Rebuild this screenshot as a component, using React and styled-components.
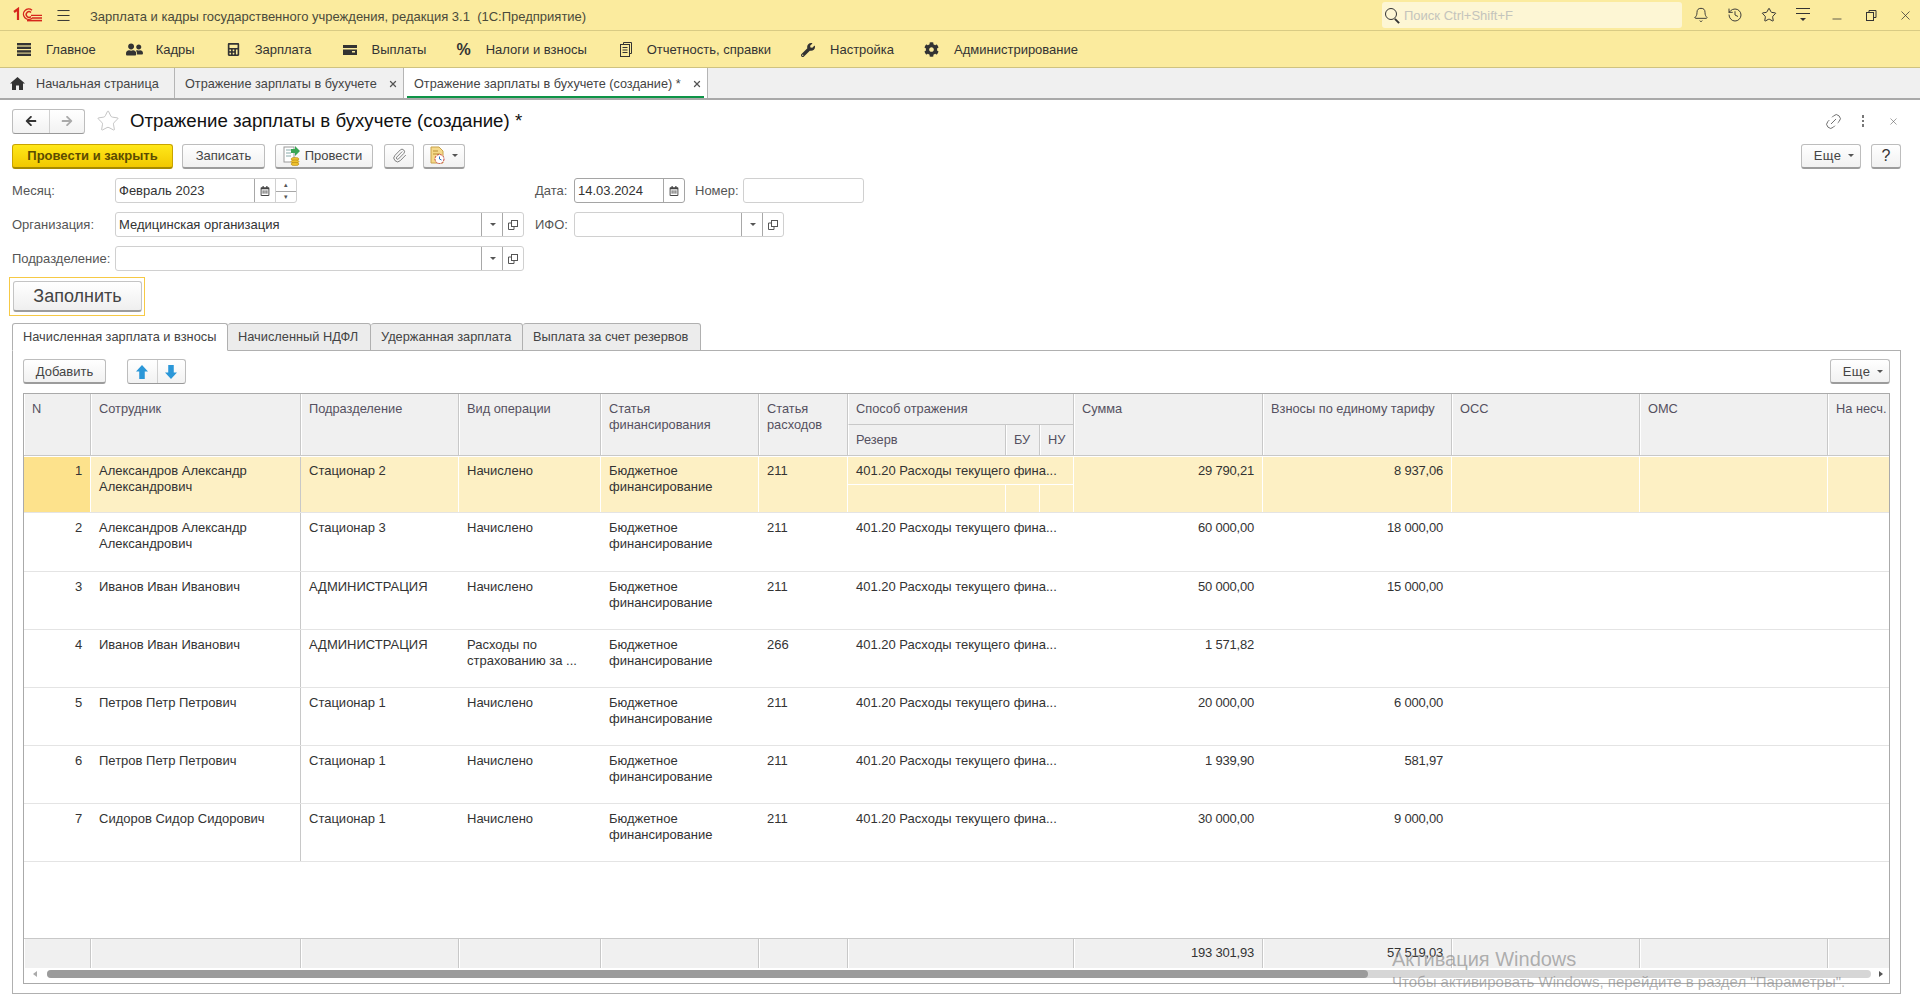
import React from "react";
import styled, { createGlobalStyle } from "styled-components";
import { Bell, History, Star, X, Minus, Link2, Paperclip, Menu } from "lucide-react";
import { FaCalculator, FaWrench, FaCog, FaUserFriends, FaArrowLeft, FaArrowRight, FaRegCalendarAlt } from "react-icons/fa";

const GlobalStyle = createGlobalStyle`
  html, body { margin: 0; padding: 0; background: #fff; }
  body { font-family: "Liberation Sans", Arial, sans-serif; font-size: 13px; color: #333; }
  * { box-sizing: border-box; }
`;

const COLUMNS = "67px 210px 158px 142px 158px 89px 158px 34px 34px 189px 189px 188px 188px 100px";

const FIN = "Бюджетное финансирование";
const WAY = "401.20 Расходы текущего фина...";
const rows = [
  { n: 1, name: "Александров Александр Александрович", dep: "Стационар 2", op: "Начислено", art: "211", sum: "29 790,21", fee: "8 937,06" },
  { n: 2, name: "Александров Александр Александрович", dep: "Стационар 3", op: "Начислено", art: "211", sum: "60 000,00", fee: "18 000,00" },
  { n: 3, name: "Иванов Иван Иванович", dep: "АДМИНИСТРАЦИЯ", op: "Начислено", art: "211", sum: "50 000,00", fee: "15 000,00" },
  { n: 4, name: "Иванов Иван Иванович", dep: "АДМИНИСТРАЦИЯ", op: "Расходы по страхованию за ...", art: "266", sum: "1 571,82", fee: "" },
  { n: 5, name: "Петров Петр Петрович", dep: "Стационар 1", op: "Начислено", art: "211", sum: "20 000,00", fee: "6 000,00" },
  { n: 6, name: "Петров Петр Петрович", dep: "Стационар 1", op: "Начислено", art: "211", sum: "1 939,90", fee: "581,97" },
  { n: 7, name: "Сидоров Сидор Сидорович", dep: "Стационар 1", op: "Начислено", art: "211", sum: "30 000,00", fee: "9 000,00" },
];

const ThickBars = () => (
  <svg width="14" height="13" viewBox="0 0 14 13">
    <rect y="0" width="14" height="2.4" fill="#333" />
    <rect y="3.6" width="14" height="2.4" fill="#333" />
    <rect y="7.2" width="14" height="2.4" fill="#333" />
    <rect y="10.6" width="14" height="2.4" fill="#333" />
  </svg>
);

const HomeIcon = () => (
  <svg width="15" height="13" viewBox="0 0 15 13" fill="#333">
    <path d="M7.5 0L15 6.6h-2V13H9V8.500H6V13H2V6.600H0z" />
  </svg>
);

const WalletIcon = () => (
  <svg width="14" height="12" viewBox="0 0 14 12" fill="#333">
    <path d="M0 1h14v3H0zM0 5.500h14V11H0z" />
    <rect x="9" y="7" width="3" height="1.500" fill="#fbeb9e" />
  </svg>
);

const ReportIcon = () => (
  <svg width="12" height="15" viewBox="0 0 12 15" fill="none" stroke="#333">
    <path d="M3.500 2.500V.5h8v11H9.500" />
    <rect x=".5" y="2.500" width="9" height="12" />
    <path d="M2.500 5.500h5M2.500 8h5M2.500 10.500h5" />
  </svg>
);

const BlockArrow = ({ down }) => (
  <svg width="12" height="14" viewBox="0 0 13 15" style={down ? { transform: "rotate(180deg)" } : undefined}>
    <path d="M6.500 0L13 7H9.500v8h-6V7H0z" fill="#2b97d8" />
  </svg>
);

const Logo = () => (
  <svg width="30" height="16" viewBox="0 0 30 16" fill="none" stroke="#d6261c">
    <path d="M1 5 L5 2 V13" strokeWidth="2.2" />
    <path d="M20 3.2 A5.2 5.2 0 1 0 20 11.2" strokeWidth="1.4" transform="translate(-1 0)" />
    <path d="M18 5.5 A2.8 2.8 0 1 0 18 9.5" strokeWidth="1.4" />
    <path d="M14 13.6 H29" strokeWidth="1.6" />
    <path d="M18 8.4 H29 M19 11 H29" strokeWidth="1.3" />
  </svg>
);

const PostIcon = () => (
  <svg width="18" height="20" viewBox="0 0 18 20">
    <rect x="1" y="1" width="10" height="15" fill="#fff" stroke="#9a9a9a" />
    <path d="M3 4h6M3 7h5M3 10h5" stroke="#8aa" />
    <path d="M8 3h4V0l5 5-5 5V7H8z" fill="#3aa655" />
    <ellipse cx="12" cy="13" rx="4" ry="1.6" fill="#eec22e" stroke="#b88a10" strokeWidth=".6" />
    <ellipse cx="12" cy="15.5" rx="4" ry="1.6" fill="#eec22e" stroke="#b88a10" strokeWidth=".6" />
    <ellipse cx="12" cy="18" rx="4" ry="1.6" fill="#eec22e" stroke="#b88a10" strokeWidth=".6" />
  </svg>
);

const DocClockIcon = () => (
  <svg width="15" height="19" viewBox="0 0 15 19">
    <path d="M1 1h8l4 4v12H1z" fill="#f5d98a" stroke="#c9a24a" />
    <path d="M3 5h5M3 8h7" stroke="#b98f35" />
    <circle cx="9.5" cy="13" r="4.5" fill="#fff" stroke="#c23a3a" strokeDasharray="2 1" />
    <path d="M9.5 10.5V13l2 1" stroke="#2a6fc0" fill="none" />
  </svg>
);

const RestoreIcon = () => (
  <svg width="11" height="11" viewBox="0 0 11 11" fill="none" stroke="#333">
    <rect x=".5" y="2.5" width="7" height="8" />
    <path d="M3 2.5V.5h7v7H7.500" />
  </svg>
);

const FilterIcon = () => (
  <svg width="16" height="16" viewBox="0 0 16 16" fill="none" stroke="#333">
    <path d="M1 1.500H15M1 6.500H15" />
    <path d="M5 11h6l-3 3z" fill="#333" stroke="none" />
  </svg>
);

const PopupIcon = () => (
  <svg width="10" height="10" viewBox="0 0 10 10" fill="none" stroke="#555">
    <rect x="3.500" y=".5" width="6" height="6" />
    <path d="M3.500 3H.5v6.500H6V6.500" />
  </svg>
);

const App = () => {
  const menuItems = [
    { icon: <ThickBars />, label: "Главное", ml: 17, gap: 15 },
    { icon: <FaUserFriends size={17} />, label: "Кадры", ml: 30, gap: 13 },
    { icon: <FaCalculator size={13} />, label: "Зарплата", ml: 32, gap: 15 },
    { icon: <WalletIcon />, label: "Выплаты", ml: 31, gap: 15 },
    { icon: <Percent>%</Percent>, label: "Налоги и взносы", ml: 30, gap: 15 },
    { icon: <ReportIcon />, label: "Отчетность, справки", ml: 33, gap: 15 },
    { icon: <FaWrench size={14} />, label: "Настройка", ml: 30, gap: 15 },
    { icon: <FaCog size={15} />, label: "Администрирование", ml: 30, gap: 15 },
  ];

  return (
    <Page>
      <GlobalStyle />
      <TopBar>
        <LogoSlot><Logo /></LogoSlot>
        <Menu size={17} strokeWidth={1.4} color="#333" />
        <AppTitle>Зарплата и кадры государственного учреждения, редакция 3.1&nbsp; (1С:Предприятие)</AppTitle>
        <SearchBox>
          <SearchGlass />
          <SearchHint>Поиск Ctrl+Shift+F</SearchHint>
        </SearchBox>
        <TopIcons>
          <Bell size={16} strokeWidth={1.4} />
          <History size={16} strokeWidth={1.4} />
          <Star size={16} strokeWidth={1.5} />
          <FilterIcon />
          <Minus size={14} strokeWidth={1.3} style={{ marginTop: 8 }} />
          <RestoreIcon />
          <X size={15} strokeWidth={1.2} />
        </TopIcons>
      </TopBar>

      <MenuBar>
        {menuItems.map((item) => (
          <MenuItem key={item.label} $ml={item.ml} $gap={item.gap}>
            <MenuIcon>{item.icon}</MenuIcon>
            {item.label}
          </MenuItem>
        ))}
      </MenuBar>

      <OpenTabs>
        <OpenTab $w={175}>
          <HomeIcon />
          <span>Начальная страница</span>
        </OpenTab>
        <OpenTab $w={229}>
          <span>Отражение зарплаты в бухучете</span>
          <X size={10} strokeWidth={3} color="#555" />
        </OpenTab>
        <OpenTab $w={304} $active>
          <span>Отражение зарплаты в бухучете (создание) *</span>
          <X size={10} strokeWidth={3} color="#555" />
        </OpenTab>
      </OpenTabs>

      <Content>
        <TitleRow>
          <NavGroup>
            <NavPart><FaArrowLeft size={12} color="#333" /></NavPart>
            <NavPart><FaArrowRight size={12} color="#aaa" /></NavPart>
          </NavGroup>
          <Star size={24} strokeWidth={0.8} color="#b5b5b5" />
          <DocTitle>Отражение зарплаты в бухучете (создание) *</DocTitle>
          <TitleTools>
            <Link2 size={19} strokeWidth={1} color="#555" style={{ transform: "rotate(-45deg)" }} />
            <Dots><i /><i /><i /></Dots>
            <X size={11} strokeWidth={1.2} color="#555" />
          </TitleTools>
        </TitleRow>

        <CommandRow>
          <MainButton>Провести и закрыть</MainButton>
          <Button $w={83} $ml={9}>Записать</Button>
          <PostButton $w={98} $ml={10}><PostIcon />Провести</PostButton>
          <Button $w={30} $ml={11}><Paperclip size={15} strokeWidth={1.3} color="#666" /></Button>
          <Button $w={42} $ml={9}><DocClockIcon /><Caret /></Button>
          <MoreButton $w={60} $ml="auto">Еще<Caret /></MoreButton>
          <HelpButton $w={30} $ml={10}>?</HelpButton>
        </CommandRow>

        <FormRow>
          <Label $w={103}>Месяц:</Label>
          <Field $w={182}>
            <FieldValue>Февраль 2023</FieldValue>
            <FieldPart $w={21}><FaRegCalendarAlt size={10} color="#444" /></FieldPart>
            <Spin><SpinArrow>▴</SpinArrow><SpinArrow>▾</SpinArrow></Spin>
          </Field>
          <Label $w={39} $ml={238}>Дата:</Label>
          <Field $w={111} $dark>
            <FieldValue>14.03.2024</FieldValue>
            <FieldPart $w={21}><FaRegCalendarAlt size={10} color="#444" /></FieldPart>
          </Field>
          <Label $w={48} $ml={10}>Номер:</Label>
          <Field $w={121} />
        </FormRow>
        <FormRow>
          <Label $w={103}>Организация:</Label>
          <Field $w={409}>
            <FieldValue>Медицинская организация</FieldValue>
            <FieldPart $w={21}><Caret /></FieldPart>
            <FieldPart $w={21}><PopupIcon /></FieldPart>
          </Field>
          <Label $w={39} $ml={11}>ИФО:</Label>
          <Field $w={210}>
            <FieldValue />
            <FieldPart $w={21}><Caret /></FieldPart>
            <FieldPart $w={21}><PopupIcon /></FieldPart>
          </Field>
        </FormRow>
        <FormRow>
          <Label $w={103}>Подразделение:</Label>
          <Field $w={409}>
            <FieldValue />
            <FieldPart $w={21}><Caret /></FieldPart>
            <FieldPart $w={21}><PopupIcon /></FieldPart>
          </Field>
        </FormRow>

        <FocusFrame>
          <FillButton>Заполнить</FillButton>
        </FocusFrame>

        <PageTabs>
          <PageTab $w={216} $active>Начисленная зарплата и взносы</PageTab>
          <PageTab $w={143}>Начисленный НДФЛ</PageTab>
          <PageTab $w={152}>Удержанная зарплата</PageTab>
          <PageTab $w={178}>Выплата за счет резервов</PageTab>
        </PageTabs>

        <TabPanel>
          <PanelToolbar>
            <Button $w={83}>Добавить</Button>
            <ArrowGroup>
              <NavPart><BlockArrow /></NavPart>
              <NavPart><BlockArrow down /></NavPart>
            </ArrowGroup>
            <MoreButton $w={60} $ml="auto">Еще<Caret /></MoreButton>
          </PanelToolbar>

          <TableFrame>
            <HeadGrid>
              <HeadCell $span2>N</HeadCell>
              <HeadCell $span2>Сотрудник</HeadCell>
              <HeadCell $span2>Подразделение</HeadCell>
              <HeadCell $span2>Вид операции</HeadCell>
              <HeadCell $span2>Статья финансирования</HeadCell>
              <HeadCell $span2>Статья расходов</HeadCell>
              <HeadCell $cols={3}>Способ отражения</HeadCell>
              <HeadCell $span2>Сумма</HeadCell>
              <HeadCell $span2 $nowrap>Взносы по единому тарифу</HeadCell>
              <HeadCell $span2>ОСС</HeadCell>
              <HeadCell $span2>ОМС</HeadCell>
              <HeadCell $span2 $nowrap>На несч.</HeadCell>
              <SubHeadCell>Резерв</SubHeadCell>
              <SubHeadCell>БУ</SubHeadCell>
              <SubHeadCell>НУ</SubHeadCell>
            </HeadGrid>

            <TableBody>
              {rows.map((row) => {
                const sel = row.n === 1;
                return (
                  <DataRow key={row.n} $h={sel ? 56 : row.n === 2 ? 59 : 58} $sel={sel}>
                    <Cell $sel={sel} $num $mark={sel}>{row.n}</Cell>
                    <Cell $sel={sel} $divider>{row.name}</Cell>
                    <Cell $sel={sel}>{row.dep}</Cell>
                    <Cell $sel={sel}>{row.op}</Cell>
                    <Cell $sel={sel}>{FIN}</Cell>
                    <Cell $sel={sel}>{row.art}</Cell>
                    <WayCell $sel={sel}>{WAY}</WayCell>
                    <Cell $sel={sel} $num>{row.sum}</Cell>
                    <Cell $sel={sel} $num>{row.fee}</Cell>
                    <Cell $sel={sel} />
                    <Cell $sel={sel} />
                    <Cell $sel={sel} />
                    <SubCell $sel={sel} />
                    <SubCell $sel={sel} />
                    <SubCell $sel={sel} />
                  </DataRow>
                );
              })}
            </TableBody>

            <FootGrid>
              <FootCell />
              <FootCell />
              <FootCell />
              <FootCell />
              <FootCell />
              <FootCell />
              <FootCell $cols={3} />
              <FootCell>193 301,93</FootCell>
              <FootCell>57 519,03</FootCell>
              <FootCell />
              <FootCell />
              <FootCell />
            </FootGrid>

            <ScrollStrip>
              <ScrollArrow $left />
              <ScrollTrack>
                <ScrollThumb />
              </ScrollTrack>
              <ScrollArrow />
            </ScrollStrip>
          </TableFrame>
        </TabPanel>
      </Content>

      <Watermark>
        <WatermarkTitle>Активация Windows</WatermarkTitle>
        <WatermarkText>Чтобы активировать Windows, перейдите в раздел "Параметры".</WatermarkText>
      </Watermark>
    </Page>
  );
};

export default App;

const Page = styled.div`
  position: relative;
  width: 1920px;
  height: 995px;
  overflow: hidden;
  display: flex;
  flex-direction: column;
  background: #fff;
  font-size: 13px;
`;
const TopBar = styled.div`
  height: 31px;
  flex: none;
  display: flex;
  align-items: center;
  background: #fbeb9e;
  border-bottom: 1px solid #d9cb84;
  padding-left: 13px;
`;
const LogoSlot = styled.div`
  width: 42px;
  display: flex;
  align-items: center;
`;
const AppTitle = styled.div`
  margin-left: 18px;
  padding-top: 2px;
  color: #4a4a3a;
`;
const SearchBox = styled.div`
  position: relative;
  margin-left: auto;
  width: 300px;
  height: 26px;
  background: #fdf6d4;
  border-radius: 3px;
  display: flex;
  align-items: center;
  padding-left: 22px;
`;
const SearchGlass = styled.span`
  position: absolute;
  left: 3px;
  top: 6px;
  width: 12px;
  height: 12px;
  border: 1.5px solid #333;
  border-radius: 50%;
  &::after {
    content: "";
    position: absolute;
    right: -4px;
    bottom: -3px;
    width: 6px;
    height: 2px;
    background: #333;
    transform: rotate(45deg);
  }
`;
const SearchHint = styled.span`
  color: #c4c4bc;
`;
const TopIcons = styled.div`
  width: 238px;
  flex: none;
  display: grid;
  grid-template-columns: repeat(7, 34px);
  justify-items: center;
  align-items: center;
  color: #333;
  padding-left: 2px;
`;
const MenuBar = styled.div`
  height: 37px;
  flex: none;
  display: flex;
  align-items: center;
  padding-top: 1px;
  background: #fbeb9e;
  border-bottom: 1px solid #cfc27f;
`;
const MenuItem = styled.div`
  display: flex;
  align-items: center;
  gap: ${(p) => p.$gap}px;
  margin-left: ${(p) => p.$ml}px;
  color: #333;
`;
const MenuIcon = styled.span`
  display: flex;
  color: #333;
`;
const Percent = styled.span`
  font-size: 16px;
  font-weight: 700;
  color: #333;
`;
const OpenTabs = styled.div`
  height: 32px;
  flex: none;
  display: flex;
  background: #f0f0f0;
  border-bottom: 2px solid #a9a9a9;
`;
const OpenTab = styled.div`
  position: relative;
  width: ${(p) => p.$w}px;
  display: flex;
  align-items: center;
  gap: 11px;
  padding: 1px 0 0 10px;
  border-right: 1px solid #b5b5b5;
  background: ${(p) => (p.$active ? "#fff" : "transparent")};
  color: #444;
  font-size: 12.7px;
  white-space: nowrap;
  ${(p) =>
    p.$active &&
    `&::after {
      content: "";
      position: absolute;
      left: 3px;
      right: 3px;
      bottom: 0;
      height: 2px;
      background: #0e9447;
    }`}
`;
const Content = styled.div`
  flex: 1;
  min-height: 0;
  display: flex;
  flex-direction: column;
  padding: 8px 19px 1px 12px;
`;
const TitleRow = styled.div`
  height: 26px;
  flex: none;
  display: flex;
  align-items: center;
  gap: 11px;
`;
const NavGroup = styled.div`
  width: 73px;
  height: 25px;
  display: grid;
  grid-template-columns: 1fr 1fr;
  border: 1px solid #bdbdbd;
  border-bottom-color: #999;
  border-radius: 3px;
  background: linear-gradient(#fff, #f2f2f2);
`;
const NavPart = styled.div`
  display: flex;
  align-items: center;
  justify-content: center;
  & + & {
    border-left: 1px solid #d0d0d0;
  }
`;
const DocTitle = styled.div`
  font-size: 18.67px;
  color: #111;
  margin-left: -1px;
`;
const TitleTools = styled.div`
  margin-left: auto;
  margin-right: -7px;
  display: grid;
  grid-template-columns: repeat(3, 30px);
  justify-items: center;
  align-items: center;
`;
const Dots = styled.span`
  display: flex;
  flex-direction: column;
  gap: 2px;
  i {
    display: block;
    width: 2.500px;
    height: 2.500px;
    background: #777;
  }
`;
const CommandRow = styled.div`
  display: flex;
  align-items: center;
  height: 26px;
  margin-top: 9px;
  flex: none;
`;
const Button = styled.div`
  width: ${(p) => p.$w}px;
  height: 25px;
  flex: none;
  margin-left: ${(p) => (p.$ml === "auto" ? "auto" : `${p.$ml || 0}px`)};
  display: flex;
  align-items: center;
  justify-content: center;
  gap: 5px;
  color: #444;
  border: 1px solid #bdbdbd;
  border-bottom: 2px solid #9c9c9c;
  border-radius: 3px;
  background: linear-gradient(#fff, #f1f1f1);
`;
const MainButton = styled(Button)`
  width: 161px;
  font-weight: 700;
  color: #5c4c00;
  border-color: #c9a400;
  border-bottom-color: #a78a00;
  background: linear-gradient(#ffe81a, #f2c800);
`;
const PostButton = styled(Button)`
  gap: 4px;
  padding-right: 3px;
`;
const MoreButton = styled(Button)`
  padding-left: 6px;
  letter-spacing: 0.3px;
`;
const HelpButton = styled(Button)`
  font-size: 16px;
  color: #333;
`;
const Caret = styled.span`
  display: inline-block;
  width: 0;
  height: 0;
  border-left: 3px solid transparent;
  border-right: 3px solid transparent;
  border-top: 3px solid #555;
  margin-left: 2px;
`;
const FormRow = styled.div`
  display: flex;
  align-items: center;
  height: 25px;
  flex: none;
  margin-top: 9px;
`;
const Label = styled.div`
  width: ${(p) => p.$w}px;
  margin-left: ${(p) => p.$ml || 0}px;
  flex: none;
  color: #555;
`;
const Field = styled.div`
  width: ${(p) => p.$w}px;
  height: 25px;
  flex: none;
  display: flex;
  border: 1px solid ${(p) => (p.$dark ? "#a5a5a5" : "#d0d0d0")};
  border-radius: 3px;
  background: #fff;
`;
const FieldValue = styled.div`
  flex: 1;
  display: flex;
  align-items: center;
  padding-left: 3px;
  color: #333;
`;
const FieldPart = styled.div`
  width: ${(p) => p.$w}px;
  flex: none;
  display: flex;
  align-items: center;
  justify-content: center;
  border-left: 1px solid #a8a8a8;
`;
const Spin = styled.div`
  width: 21px;
  flex: none;
  display: grid;
  grid-template-rows: 1fr 1fr;
  border-left: 1px solid #d0d0d0;
`;
const SpinArrow = styled.span`
  display: flex;
  align-items: center;
  justify-content: center;
  font-size: 7px;
  color: #555;
  & + & {
    border-top: 1px solid #a8a8a8;
  }
`;
const FocusFrame = styled.div`
  width: 136px;
  height: 39px;
  flex: none;
  margin: 6px 0 0 -3px;
  padding: 3px;
  border: 1px solid #f6c945;
`;
const FillButton = styled.div`
  width: 129px;
  height: 31px;
  display: flex;
  align-items: center;
  justify-content: center;
  padding-top: 1px;
  font-size: 18px;
  color: #444;
  border: 1px solid #c4c4c4;
  border-bottom: 2px solid #9c9c9c;
  border-radius: 3px;
  background: linear-gradient(#fff, #efefef);
`;
const PageTabs = styled.div`
  display: flex;
  height: 28px;
  flex: none;
  margin-top: 7px;
  margin-bottom: -1px;
  position: relative;
  z-index: 1;
`;
const PageTab = styled.div`
  width: ${(p) => p.$w}px;
  display: flex;
  align-items: center;
  padding: 0 0 2px 10px;
  font-size: 12.8px;
  white-space: nowrap;
  color: #444;
  border: 1px solid #b0b0b0;
  border-left-width: ${(p) => (p.$active ? "1px" : "0")};
  border-bottom-color: ${(p) => (p.$active ? "#fff" : "#b0b0b0")};
  border-radius: 3px 3px 0 0;
  background: ${(p) => (p.$active ? "#fff" : "#ececec")};
`;
const TabPanel = styled.div`
  flex: 1;
  min-height: 0;
  display: flex;
  flex-direction: column;
  border: 1px solid #b0b0b0;
  padding: 8px 10px 9px 10px;
`;
const PanelToolbar = styled.div`
  display: flex;
  height: 26px;
  flex: none;
  margin-bottom: 8px;
`;
const ArrowGroup = styled(NavGroup)`
  width: 59px;
  height: 25px;
  margin-left: 21px;
`;
const TableFrame = styled.div`
  flex: 1;
  min-height: 0;
  display: flex;
  flex-direction: column;
  overflow: hidden;
  border: 1px solid #aaa;
`;
const HeadGrid = styled.div`
  display: grid;
  grid-template-columns: ${COLUMNS};
  grid-template-rows: 31px 30px;
  flex: none;
  width: max-content;
  margin-bottom: 1px;
  border-bottom: 1px solid #c8c8c8;
  height: 62px;
`;
const HeadCell = styled.div`
  grid-row: span ${(p) => (p.$span2 ? 2 : 1)};
  grid-column: span ${(p) => p.$cols || 1};
  padding: 7px 14px 0 7px;
  line-height: 16px;
  font-size: 12.8px;
  color: #555060;
  background: #f0f0f0;
  border-right: 1px solid #c8c8c8;
  border-left: 1px solid #fff;
  white-space: ${(p) => (p.$nowrap ? "nowrap" : "normal")};
  overflow: hidden;
  ${(p) => p.$cols && "border-bottom: 1px solid #c8c8c8;"}
`;
const SubHeadCell = styled(HeadCell)`
  padding-right: 0;
`;
const TableBody = styled.div`
  flex: 1;
  min-height: 0;
  width: max-content;
`;
const DataRow = styled.div`
  display: grid;
  grid-template-columns: ${COLUMNS};
  grid-template-rows: 1fr 1fr;
  height: ${(p) => p.$h}px;
  border-bottom: 1px solid #e4e4e4;
`;
const Cell = styled.div`
  grid-row: span 2;
  padding: ${(p) => (p.$sel ? "6px" : "7px")} 8px 0 8px;
  line-height: 16px;
  color: #333;
  letter-spacing: ${(p) => (p.$num ? "-0.2px" : "0")};
  text-align: ${(p) => (p.$num ? "right" : "left")};
  background: ${(p) => (p.$mark ? "#fde28c" : p.$sel ? "#fdf0c4" : "transparent")};
  border-right: 1px solid ${(p) => (p.$divider ? "#c8c8c8" : p.$sel ? "#fff" : "transparent")};
`;
const WayCell = styled.div`
  grid-column: span 3;
  padding: ${(p) => (p.$sel ? "6px" : "7px")} 8px 0 8px;
  line-height: 16px;
  white-space: nowrap;
  overflow: hidden;
  background: ${(p) => (p.$sel ? "#fdf0c4" : "transparent")};
  border-bottom: 1px solid ${(p) => (p.$sel ? "#fff" : "transparent")};
  border-right: 1px solid ${(p) => (p.$sel ? "#fff" : "transparent")};
`;
const SubCell = styled.div`
  background: ${(p) => (p.$sel ? "#fdf0c4" : "transparent")};
  border-right: 1px solid ${(p) => (p.$sel ? "#fff" : "transparent")};
`;
const FootGrid = styled.div`
  display: grid;
  grid-template-columns: ${COLUMNS};
  height: 30px;
  flex: none;
  width: max-content;
  border-top: 1px solid #c8c8c8;
`;
const FootCell = styled.div`
  grid-column: span ${(p) => p.$cols || 1};
  padding: 6px 8px 0 0;
  line-height: 16px;
  text-align: right;
  letter-spacing: -0.2px;
  color: #333;
  background: #f0f0f0;
  border-right: 1px solid #c8c8c8;
  border-left: 1px solid #fff;
`;
const ScrollStrip = styled.div`
  height: 15px;
  flex: none;
  display: flex;
  align-items: center;
  padding: 0 6px 3px 9px;
  background: #fff;
`;
const ScrollArrow = styled.span`
  width: 0;
  height: 0;
  flex: none;
  border-top: 3px solid transparent;
  border-bottom: 3px solid transparent;
  ${(p) => (p.$left ? "border-right: 4px solid #aaa;" : "border-left: 4px solid #555;")}
`;
const ScrollTrack = styled.div`
  flex: 1;
  height: 8px;
  margin: 0 8px 0 10px;
  background: #d6d6d6;
  border-radius: 4px;
`;
const ScrollThumb = styled.div`
  width: 1321px;
  height: 8px;
  background: #9b9b9b;
  border-radius: 4px;
`;
const Watermark = styled.div`
  position: absolute;
  left: 1392px;
  top: 947px;
  pointer-events: none;
  color: rgba(130, 130, 130, 0.62);
`;
const WatermarkTitle = styled.div`
  font-size: 20px;
  line-height: 24px;
`;
const WatermarkText = styled.div`
  font-size: 15px;
  line-height: 18px;
  margin-top: 2px;
  white-space: nowrap;
`;
